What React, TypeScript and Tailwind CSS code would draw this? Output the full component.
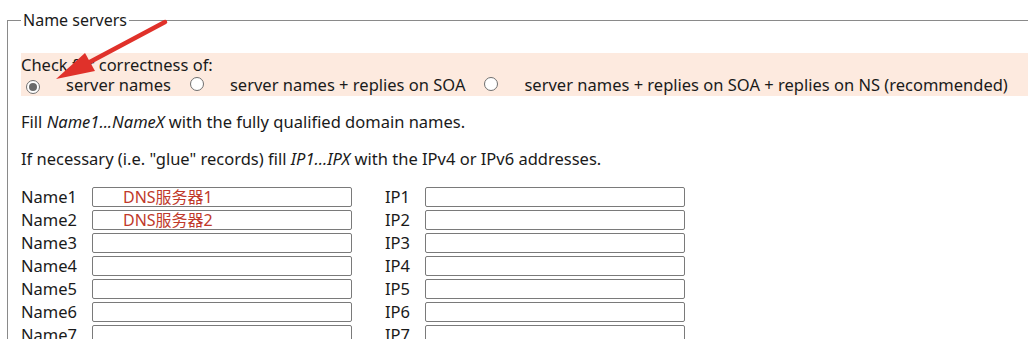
import React from 'react'

const rows = [1, 2, 3, 4, 5, 6, 7]
const names: Record<number, string> = { 1: 'DNS服务器1', 2: 'DNS服务器2' }

const options = [
  'server names',
  'server names + replies on SOA',
  'server names + replies on SOA + replies on NS (recommended)',
]

function Radio({ checked }: { checked?: boolean }) {
  return (
    <span className="inline-flex h-[14px] w-[14px] shrink-0 items-center justify-center rounded-full border border-[#6f6f6f] bg-white">
      {checked ? <span className="h-[8px] w-[8px] rounded-full bg-[#6a6a6a]" /> : null}
    </span>
  )
}

export default function App() {
  return (
    <div className="relative h-[339px] w-[1028px] overflow-hidden bg-white font-['Noto_Sans','Noto_Sans_CJK_SC',sans-serif] text-[16.5px] text-[#1a1a1a]">
      <fieldset className="ml-[7px] mt-[9px] w-[1060px] border border-[#8a8a8a] pl-[13px]">
        <legend className="px-[2px] text-[16px] leading-[22px]">Name servers</legend>

        <div className="mt-[22px] bg-[#fdeadf] pb-[1px] pt-[1px]">
          <div className="leading-[21px]">Check for correctness of:</div>
          <div className="flex items-center leading-[20px]">
            {options.map((o, i) => (
              <label key={o} className="flex items-center">
                <span className="ml-[5px] mr-[26px]">
                  <Radio checked={i === 0} />
                </span>
                <span className="mr-[14px]">{o}</span>
              </label>
            ))}
          </div>
        </div>

        <p className="mt-[15px] leading-[22px]">
          Fill <i>Name1...NameX</i> with the fully qualified domain names.
        </p>
        <p className="mt-[15px] leading-[22px]">
          If necessary (i.e. "glue" records) fill <i>IP1...IPX</i> with the IPv4 or IPv6 addresses.
        </p>

        <div className="mt-[17px] flex flex-col gap-[3px] leading-[20px]">
          {rows.map((n) => (
            <div key={n} className="flex items-center">
              <span className="w-[71px]">Name{n}</span>
              <div className="flex h-[20px] w-[260px] items-center rounded-[2px] border border-[#7a7a7a] pl-[30px] text-[16px] text-[#c0392b]">
                {names[n] ?? ''}
              </div>
              <span className="ml-[33px] w-[40px]">IP{n}</span>
              <div className="h-[20px] w-[260px] rounded-[2px] border border-[#7a7a7a]" />
            </div>
          ))}
        </div>
      </fieldset>

      <svg className="absolute left-0 top-0" width="200" height="100" viewBox="0 0 200 100">
        <line x1="165" y1="22" x2="88" y2="63" stroke="#e0312a" strokeWidth="4.5" strokeLinecap="round" />
        <polygon points="56,79 85,53 95,71" fill="#e0312a" />
      </svg>
    </div>
  )
}
